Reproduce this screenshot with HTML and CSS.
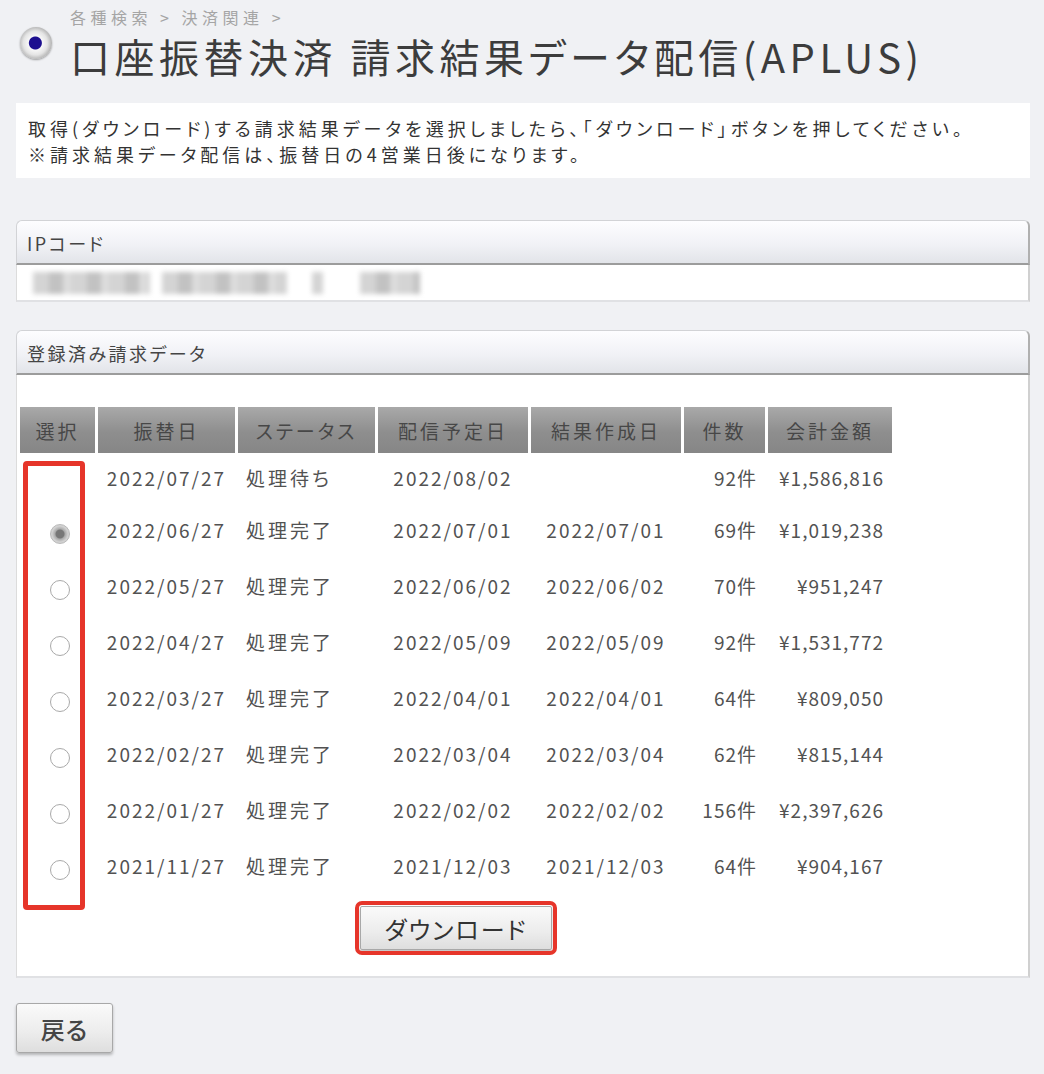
FILE: index.html
```html
<!DOCTYPE html>
<html lang="ja">
<head>
    <meta charset="UTF-8">
    <title>口座振替決済 請求結果データ配信(APLUS)</title>
    <link rel="stylesheet" href="styles.css">
</head>
<body>
    <div class="page">
        <div class="head">
            <span class="bullet"></span>
            <div class="head-text">
                <div class="crumb">各種検索 &gt; 決済関連 &gt;</div>
                <h1>口座振替決済 請求結果データ配信(APLUS)</h1>
            </div>
        </div>

        <div class="info">
            <p>取得(ダウンロード)する請求結果データを選択しましたら、「ダウンロード」ボタンを押してください。</p>
            <p>※請求結果データ配信は、振替日の4営業日後になります。</p>
        </div>

        <div class="panel">
            <div class="panel-head">IPコード</div>
            <div class="panel-body ip">
                <span class="blur b1"></span>
                <span class="blur b2"></span>
                <span class="blur b3"></span>
                <span class="blur b4"></span>
            </div>
        </div>

        <form class="panel" name="billing">
            <div class="panel-head">登録済み請求データ</div>
            <div class="panel-body list">
                <div class="data-wrap">
                    <table class="data">
                        <thead>
                            <tr>
                                <th class="c-sel">選択</th>
                                <th class="c-date">振替日</th>
                                <th class="c-status">ステータス</th>
                                <th class="c-plan">配信予定日</th>
                                <th class="c-made">結果作成日</th>
                                <th class="c-count">件数</th>
                                <th class="c-sum">会計金額</th>
                            </tr>
                        </thead>
                        <tbody>
                            <tr class="first">
                                <td class="sel"></td>
                                <td class="ctr">2022/07/27</td>
                                <td class="lft">処理待ち</td>
                                <td class="ctr">2022/08/02</td>
                                <td class="ctr"></td>
                                <td class="rgt">92件</td>
                                <td class="rgt">¥1,586,816</td>
                            </tr>
                            <tr>
                                <td class="sel"><input type="radio" name="pick" checked></td>
                                <td class="ctr">2022/06/27</td>
                                <td class="lft">処理完了</td>
                                <td class="ctr">2022/07/01</td>
                                <td class="ctr">2022/07/01</td>
                                <td class="rgt">69件</td>
                                <td class="rgt">¥1,019,238</td>
                            </tr>
                            <tr>
                                <td class="sel"><input type="radio" name="pick"></td>
                                <td class="ctr">2022/05/27</td>
                                <td class="lft">処理完了</td>
                                <td class="ctr">2022/06/02</td>
                                <td class="ctr">2022/06/02</td>
                                <td class="rgt">70件</td>
                                <td class="rgt">¥951,247</td>
                            </tr>
                            <tr>
                                <td class="sel"><input type="radio" name="pick"></td>
                                <td class="ctr">2022/04/27</td>
                                <td class="lft">処理完了</td>
                                <td class="ctr">2022/05/09</td>
                                <td class="ctr">2022/05/09</td>
                                <td class="rgt">92件</td>
                                <td class="rgt">¥1,531,772</td>
                            </tr>
                            <tr>
                                <td class="sel"><input type="radio" name="pick"></td>
                                <td class="ctr">2022/03/27</td>
                                <td class="lft">処理完了</td>
                                <td class="ctr">2022/04/01</td>
                                <td class="ctr">2022/04/01</td>
                                <td class="rgt">64件</td>
                                <td class="rgt">¥809,050</td>
                            </tr>
                            <tr>
                                <td class="sel"><input type="radio" name="pick"></td>
                                <td class="ctr">2022/02/27</td>
                                <td class="lft">処理完了</td>
                                <td class="ctr">2022/03/04</td>
                                <td class="ctr">2022/03/04</td>
                                <td class="rgt">62件</td>
                                <td class="rgt">¥815,144</td>
                            </tr>
                            <tr>
                                <td class="sel"><input type="radio" name="pick"></td>
                                <td class="ctr">2022/01/27</td>
                                <td class="lft">処理完了</td>
                                <td class="ctr">2022/02/02</td>
                                <td class="ctr">2022/02/02</td>
                                <td class="rgt">156件</td>
                                <td class="rgt">¥2,397,626</td>
                            </tr>
                            <tr>
                                <td class="sel"><input type="radio" name="pick"></td>
                                <td class="ctr">2021/11/27</td>
                                <td class="lft">処理完了</td>
                                <td class="ctr">2021/12/03</td>
                                <td class="ctr">2021/12/03</td>
                                <td class="rgt">64件</td>
                                <td class="rgt">¥904,167</td>
                            </tr>
                        </tbody>
                    </table>
                    <!-- 注釈の赤枠 -->
                    <div class="mark"></div>
                    <div class="actions">
                        <button type="button" class="btn btn-dl">ダウンロード</button>
                    </div>
                </div>
            </div>
        </form>

        <button type="button" class="btn btn-back">戻る</button>
    </div>
</body>
</html>
```

FILE: styles.css
```css
html,
body {
    margin: 0;
    padding: 0;
}

body {
    background: #f0f1f4;
    color: #3a3a3a;
    font-family: "Noto Sans CJK JP", "Noto Sans", sans-serif;
    font-feature-settings: "palt";
}

.page {
    width: 1014px;
    padding: 0 0 20px 16px;
}

/* 見出し */
.head {
    display: flex;
    align-items: flex-start;
}

.bullet {
    flex: none;
    width: 32px;
    height: 32px;
    margin: 27px 18px 0 4px;
    border-radius: 50%;
    background: radial-gradient(circle at 48% 50%, #1d0f8f 0 6px, #f7f7f7 7px, #e4e4e4 12px, #b9b9b9 16px);
    box-shadow: 0 1px 2px rgba(0, 0, 0, .35);
}

.crumb {
    margin-top: 8px;
    font-size: 16px;
    line-height: 18px;
    letter-spacing: 4.5px;
    color: #a5a5a5;
}

h1 {
    margin: 6px 0 0;
    font-size: 40px;
    font-weight: normal;
    line-height: 48px;
    letter-spacing: 4.5px;
    color: #3c3c3c;
}

/* 説明 */
.info {
    margin-top: 23px;
    padding: 12px 12px 11px;
    background: #fff;
    font-size: 18px;
    letter-spacing: 4px;
    color: #333;
}

.info p {
    margin: 0;
    line-height: 26px;
}

/* パネル */
.panel {
    display: block;
    margin: 0;
}

.panel + .panel {
    margin-top: 28px;
}

.info + .panel {
    margin-top: 42px;
}

.panel-head {
    height: 42px;
    padding-left: 10px;
    border: 1px solid #d2d3d6;
    border-bottom: 2px solid #9c9c9c;
    border-right: 2px solid #b0b0b0;
    border-radius: 6px 6px 0 0;
    background: linear-gradient(#fdfdff, #f1f2f6 55%, #e2e4e9);
    font-size: 18px;
    line-height: 44px;
    letter-spacing: 2.5px;
    color: #454545;
}

.panel-body {
    background: #fff;
    border-left: 1px solid #dcdcdc;
    border-right: 2px solid #d0d0d0;
    border-bottom: 2px solid #e0e1e4;
}

/* IPコード（伏せ字） */
.ip {
    display: flex;
    align-items: center;
    height: 35px;
    padding-left: 16px;
}

.blur {
    display: block;
    height: 22px;
    background: repeating-linear-gradient(90deg, #d4d4d4 0 16px, #c2c2c2 16px 30px, #dcdcdc 30px 38px);
    filter: blur(2.5px);
}

.b1 { width: 117px; }
.b2 { width: 125px; margin-left: 12px; }
.b3 { width: 11px; margin-left: 25px; }
.b4 { width: 60px; margin-left: 37px; }

.list {
    padding: 32px 0 26px;
}

.data-wrap {
    position: relative;
    display: inline-block;
}

/* 一覧表 */
table.data {
    border-collapse: separate;
    border-spacing: 3px 0;
    font-size: 19px;
    letter-spacing: 2px;
    color: #525252;
}

table.data th {
    height: 46px;
    padding: 0;
    background: linear-gradient(#a9a9a9, #8e8e8e 55%, #868686);
    font-weight: normal;
    font-size: 19px;
    letter-spacing: 3px;
    color: #474747;
    text-align: center;
}

.c-sel { width: 75px; }
.c-date { width: 137px; }
.c-status { width: 137px; }
.c-plan { width: 150px; }
.c-made { width: 150px; }
.c-count { width: 81px; }
.c-sum { width: 124px; }

table.data td {
    height: 56px;
    padding: 0 8px;
    vertical-align: middle;
    white-space: nowrap;
}

table.data tr.first td {
    height: 48px;
}

td.ctr { text-align: center; }
td.lft { text-align: left; letter-spacing: 3px; padding-left: 12px; }
td.rgt { text-align: right; letter-spacing: 1px; padding-right: 10px; }

td.sel {
    text-align: center;
}

td.sel input {
    appearance: none;
    -webkit-appearance: none;
    width: 20px;
    height: 20px;
    margin: 6px 0 0 4px;
    border: 1.5px solid #a9a9a9;
    border-radius: 50%;
    background: #fff;
    vertical-align: middle;
}

td.sel input:checked {
    border-color: #b9b9b9;
    background: radial-gradient(circle, #777 0 4px, #a9a9a9 5px, #d2d2d2 8px);
}

.mark {
    position: absolute;
    left: 6px;
    top: 54px;
    width: 52px;
    height: 439px;
    border: 5px solid #e6352a;
    border-radius: 4px;
}

.actions {
    display: flex;
    justify-content: center;
    padding-top: 13px;
}

/* ボタン */
.btn {
    font-family: "Noto Sans CJK JP", sans-serif;
    font-feature-settings: "palt";
    color: #333;
    border: 1px solid #a8a8a8;
    border-radius: 3px;
    background: linear-gradient(#fafafa, #ececec 60%, #dedede);
    box-shadow: 0 2px 3px rgba(0, 0, 0, .25);
    cursor: pointer;
}

.btn-dl {
    height: 44px;
    padding: 0 24px;
    font-size: 24px;
    letter-spacing: 2px;
    outline: 4px solid #e6352a;
    outline-offset: 1px;
    border-radius: 2px;
}

.btn-back {
    display: block;
    width: 97px;
    height: 50px;
    margin-top: 25px;
    font-size: 24px;
    font-weight: 500;
    color: #454545;
    letter-spacing: 1px;
}
```
